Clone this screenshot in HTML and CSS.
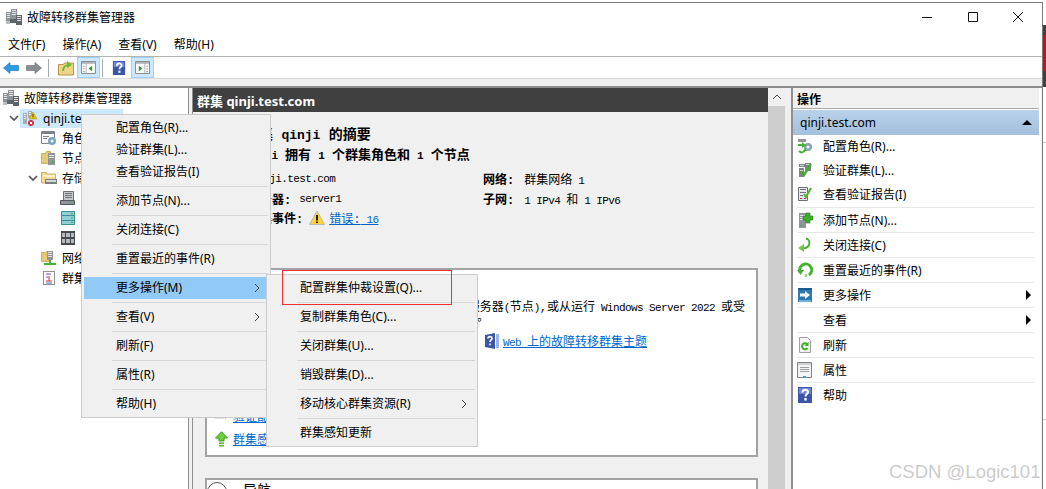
FILE: index.html
```html
<!DOCTYPE html>
<html lang="zh-CN">
<head>
<meta charset="utf-8">
<title>故障转移群集管理器</title>
<link rel="stylesheet" href="styles.css">
</head>
<body>
<svg class="defs" aria-hidden="true">
  <symbol id="i-cluster" viewBox="0 0 16 16">
    <path fill="#8d9296" d="M0 3h5v9H0zM5 0h6v10H5z"/>
    <path fill="#5f6468" d="M10 6h6v10h-6zM4 10h7v4H4z"/>
    <path fill="#e2e4e6" d="M1 4h3v1H1zM1 6h3v1H1zM1 8h3v1H1zM6 1h4v1H6zM6 3h4v1H6zM6 5h4v1H6zM11 7h4v1h-4zM11 9h4v1h-4zM11 11h4v1h-4z"/>
    <path fill="#b9bec2" d="M0 12h4v3H0z"/>
  </symbol>
  <symbol id="i-qinji" viewBox="0 0 16 16">
    <path fill="#a8adb2" d="M1 3h4v11H1zM6 1h4v7H6z"/>
    <path fill="#e8eaec" d="M2 4h2v1H2zM2 6h2v1H2zM2 8h2v1H2zM7 2h2v1H7zM7 4h2v1H7z"/>
    <path fill="#f5c518" stroke="#a98a10" stroke-width=".5" d="M11 2l4 7H7z"/>
    <path fill="#222" d="M10.600 4h.8v3h-.8zM10.600 7.500h.8v.8h-.8z"/>
    <circle cx="9" cy="13" r="3" fill="#c8303a"/>
    <path stroke="#fff" d="M7.800 11.800l2.400 2.400M10.200 11.800l-2.400 2.400"/>
  </symbol>
  <symbol id="i-roles" viewBox="0 0 16 16">
    <path fill="#fff" stroke="#7d8388" d="M.5 1.500h13v12H.5z"/>
    <path fill="#7d8388" d="M1 2h12v2H1zM2 6h6v1H2zM2 8h4v1H2z"/>
    <circle cx="11" cy="11" r="4" fill="#7ba3c4"/>
    <circle cx="11" cy="11" r="1.500" fill="#fff"/>
  </symbol>
  <symbol id="i-nodes" viewBox="0 0 16 16">
    <path fill="#e8c977" stroke="#b89a4d" stroke-width=".7" d="M.5 3.500h4l1-2h4v12h-9z"/>
    <path fill="#8f959a" d="M7 3h7v12H7z"/>
    <path fill="#e4e6e8" d="M8 5h5v1H8zM8 7h5v1H8z"/>
    <path fill="#46b030" d="M11 11h2v2h-2z"/>
  </symbol>
  <symbol id="i-storage" viewBox="0 0 16 16">
    <path fill="#f2d98e" stroke="#b89a4d" stroke-width=".7" d="M.5 2.500h5l1 1.500h8v9h-14z"/>
    <path fill="#fff3c9" d="M2 5h12v2H2z"/>
    <path fill="#787e83" d="M4 9h12v5H4z"/>
    <path fill="#d6d9db" d="M5 10h10v2H5z"/>
    <path fill="#46b030" d="M13 12.500h2v1h-2z"/>
  </symbol>
  <symbol id="i-disk" viewBox="0 0 16 16">
    <path fill="#c5c9cc" stroke="#6d7378" d="M3.500 1.500h10v9h-10z"/>
    <path fill="#6d7378" d="M5 3h7v1H5zM5 5h7v1H5zM5 7h7v1H5z"/>
    <path fill="#8f959a" stroke="#55595d" d="M.5 10.500h14v4H.500z"/>
    <path fill="#46b030" d="M11 12h2v1h-2z"/>
  </symbol>
  <symbol id="i-pool" viewBox="0 0 16 16">
    <path fill="#8fd0d6" stroke="#3f8c99" d="M1.500 1.500h13v13h-13z"/>
    <path fill="#3f8c99" d="M2 5h12v1H2zM2 10h12v1H2z"/>
    <path fill="#46b030" d="M11 3h2v1h-2zM11 7.500h2v1h-2zM11 12h2v1h-2z"/>
  </symbol>
  <symbol id="i-enclosure" viewBox="0 0 16 16">
    <path fill="#454a4e" d="M1 1h14v14H1z"/>
    <path fill="#b6babd" d="M2 3h3v4H2zM6 3h4v4H6zM11 3h3v4h-3zM2 9h3v4H2zM6 9h4v4H6zM11 9h3v4h-3z"/>
  </symbol>
  <symbol id="i-network" viewBox="0 0 16 16">
    <path fill="#e8c977" stroke="#b89a4d" stroke-width=".7" d="M.5 2.500h4l1-1h4v10h-9z"/>
    <path fill="#8f959a" d="M6 1h6v9H6z"/>
    <path fill="#e4e6e8" d="M7 2h4v1H7zM7 4h4v1H7zM7 6h4v1H7z"/>
    <path fill="#46b030" d="M8 10h2v3h5v2H3v-2h5z"/>
  </symbol>
  <symbol id="i-events" viewBox="0 0 16 16">
    <path fill="#fff" stroke="#222" stroke-dasharray="1 1" d="M2.500 1.500h11v13h-11z"/>
    <path stroke="#8a3fa0" fill="none" d="M5 4h5M5 7h2"/>
    <path stroke="#c8303a" fill="none" d="M8 6v5M5 11h6"/>
    <path stroke="#4a6fc0" fill="none" d="M5 13h6"/>
  </symbol>
  <symbol id="i-chev-down" viewBox="0 0 16 16">
    <path fill="none" stroke="#555" stroke-width="1.700" d="M4 6l4 4 4-4"/>
  </symbol>
  <symbol id="i-help" viewBox="0 0 16 16">
    <path fill="#3c55a8" d="M1 0h14v16H1z"/>
    <path fill="#6f86d2" d="M2 1h12v6H2z"/>
    <path fill="none" stroke="#fff" stroke-width="2" d="M5.500 5.500c0-3.500 5.500-3.500 5.500-.5 0 2-2.500 2-2.500 4.500"/>
    <path fill="#fff" d="M7.300 11h2.400v2.500H7.300z"/>
  </symbol>
  <symbol id="i-book" viewBox="0 0 16 16">
    <path fill="#9fb3e0" d="M12 1h3v14h-3z"/>
    <path fill="#3c55a8" d="M1 2l10-2v16l-10-2z"/>
    <path fill="none" stroke="#fff" stroke-width="1.600" d="M4 5.500c0-2.500 4-2.500 4 0 0 1.500-2 1.500-2 3.500"/>
    <path fill="#fff" d="M5.200 10.500h1.600v1.800H5.200z"/>
  </symbol>
  <symbol id="i-rolecfg" viewBox="0 0 16 16">
    <path fill="#8f959a" d="M1 1h8v3H1z"/>
    <circle cx="11" cy="9" r="4" fill="#8aa0b4"/>
    <circle cx="11" cy="9" r="1.500" fill="#fff"/>
    <path fill="none" stroke="#46b030" stroke-width="2" d="M1 7h5M2 13c2 2 5 2 6-1"/>
    <path fill="#46b030" d="M5 4l4 3-4 3zM8 10l2 3H6z"/>
  </symbol>
  <symbol id="i-validate" viewBox="0 0 16 16">
    <path fill="#7d8388" d="M2 2h6v3H2zM8 1h6v8H8zM2 6h5v9H2z"/>
    <path fill="#d6d9db" d="M3 3h4v1H3zM9 2h4v1H9zM3 8h3v1H3z"/>
    <path fill="none" stroke="#3fae2a" stroke-width="2.400" d="M4 9l3 4 7-11"/>
  </symbol>
  <symbol id="i-report" viewBox="0 0 16 16">
    <path fill="#e6e8ea" stroke="#6d7378" d="M1.500 1.500h9v13h-9z"/>
    <path fill="#6d7378" d="M3 3h6v1H3zM3 6h6v1H3zM3 9h3v1H3z"/>
    <path fill="#c8303a" d="M3 12h2v1H3zM7 12h2v1H7z"/>
    <path fill="none" stroke="#5ab030" stroke-width="2.200" d="M7 8l2 3 5-9"/>
  </symbol>
  <symbol id="i-add" viewBox="0 0 16 16">
    <path fill="#8f959a" d="M2 1h7v15H2z"/>
    <path fill="#e4e6e8" d="M3 3h5v1H3zM3 5h5v1H3zM3 7h3v1H3z"/>
    <path fill="#3fb02a" stroke="#1f7a1a" stroke-width=".6" d="M9 1h4v3h3v4h-3v3H9V8H6V4h3z"/>
    <path fill="#46b030" d="M3 13h2v1H3z"/>
  </symbol>
  <symbol id="i-close" viewBox="0 0 16 16">
    <path fill="none" stroke="#46b030" stroke-width="2" d="M9 1.500c5 1 5 9.500-3 10"/>
    <path fill="#6fca3c" d="M7 7v8l-6-4z"/>
  </symbol>
  <symbol id="i-reset" viewBox="0 0 16 16">
    <path fill="none" stroke="#46b030" stroke-width="3" d="M3 10a6 6 0 1 1 9 3"/>
    <path fill="#46b030" d="M0 8h7l-3.500 5z"/>
    <path fill="#8fdc6a" d="M8 12h2v3H8z"/>
  </symbol>
  <symbol id="i-more" viewBox="0 0 16 16">
    <path fill="#2e7ab0" d="M1 1h14v14H1z"/>
    <path fill="#1f5a88" d="M1 1h14v2H1z"/>
    <path fill="#6fb3d8" d="M2 13h12v2H2z"/>
    <path fill="#fff" d="M3 6.500h5V4l5 4-5 4V9.500H3z"/>
  </symbol>
  <symbol id="i-refresh" viewBox="0 0 16 16">
    <path fill="#f2f2f2" stroke="#9a9fa4" d="M2.500.5h8l3 3v12h-11z"/>
    <path fill="none" stroke="#3fae2a" stroke-width="2" d="M10.500 11a3 3 0 1 1 0-3.500"/>
    <path fill="#3fae2a" d="M11.500 5v4h-4z"/>
  </symbol>
  <symbol id="i-props" viewBox="0 0 16 16">
    <path fill="#f4f4f4" stroke="#7d8388" d="M.5.5h14v15H.5z"/>
    <path fill="#cdd1d4" d="M1 1h13v2H1z"/>
    <path fill="#9aa0a5" d="M3 5h9v1H3zM3 7h9v1H3zM3 9h9v1H3z"/>
    <path fill="#39a9e0" d="M6 14h3v1.500H6z"/>
  </symbol>
  <symbol id="i-warn" viewBox="0 0 16 16">
    <path fill="#ffd23a" stroke="#b7b7b7" d="M8 1l7.500 13.500H.5z"/>
    <path fill="#222" d="M7 5h2v5.500H7zM7 11.500h2V13H7z"/>
  </symbol>
  <symbol id="i-up" viewBox="0 0 16 16">
    <path fill="#6fcf3c" stroke="#3c9a20" d="M6.500.8L12.500 7H9v3H4V7H.5z"/>
    <path fill="#58b52c" d="M4 11.500h5V13H4zM4 14h5v1.500H4z"/>
  </symbol>
  <symbol id="i-server-go" viewBox="0 0 16 16">
    <path fill="#dcdcdc" d="M0 5h9v6H0z"/>
    <path fill="#46b030" d="M6 4h4V1l5 5-5 5V8H6z"/>
  </symbol>
</svg>

<div class="screen">
  <div class="window">
    <header class="titlebar">
      <svg class="ico"><use href="#i-cluster"/></svg>
      <span class="title">故障转移群集管理器</span>
      <div class="controls">
        <svg class="ctl" viewBox="0 0 12 12"><path d="M1 6.500h10" stroke="#111" fill="none"/></svg>
        <svg class="ctl" viewBox="0 0 12 12"><path d="M1.500 1.500h9v9h-9z" stroke="#111" fill="none"/></svg>
        <svg class="ctl" viewBox="0 0 12 12"><path d="M1 1l10 10M11 1L1 11" stroke="#111" fill="none"/></svg>
      </div>
    </header>

    <nav class="menubar">
      <span>文件(F)</span><span>操作(A)</span><span>查看(V)</span><span>帮助(H)</span>
    </nav>

    <div class="toolbar">
      <svg class="tb" viewBox="0 0 16 16"><path fill="#2d9be0" stroke="#1a6fb0" stroke-width=".6" d="M.5 8L7 2.500V5.500h8.500v5H7v3z"/></svg>
      <svg class="tb" viewBox="0 0 16 16"><path fill="#8a8d90" stroke="#6a6d70" stroke-width=".6" d="M15.500 8L9 2.500V5.500H.5v5H9v3z"/></svg>
      <i class="tb-sep"></i>
      <svg class="tb tb-folder" viewBox="0 0 16 16">
        <path fill="#efd58a" stroke="#b3924a" d="M.5 4.500h5l1-1.500h9v12H.5z"/>
        <path fill="none" stroke="#6dbb2f" stroke-width="2" d="M5 11c0-4 3-6 6-6"/>
        <path fill="#6dbb2f" d="M9 1l5 4-5 3z"/>
      </svg>
      <span class="tb-btn">
        <svg class="tb-win" viewBox="0 0 16 14">
          <path fill="#fff" stroke="#7d8388" d="M.5.5h15v13H.5z"/>
          <path fill="#aab0b5" d="M1 1h14v2H1zM5 3h1v10H5z"/>
          <path fill="#2a9a2a" d="M12 5v6L8 8z"/>
          <path fill="#7d8388" d="M2 5h2v1H2zM2 8h2v1H2zM2 11h2v1H2z"/>
        </svg>
      </span>
      <i class="tb-sep tb-sep-b"></i>
      <svg class="tb tb-help"><use href="#i-help"/></svg>
      <span class="tb-btn">
        <svg class="tb-win" viewBox="0 0 16 14">
          <path fill="#fff" stroke="#7d8388" d="M.5.5h15v13H.5z"/>
          <path fill="#aab0b5" d="M1 1h14v2H1zM10 3h1v10h-1z"/>
          <path fill="#2a9a2a" d="M4 5v6l4-3z"/>
          <path fill="#7d8388" d="M12 5h2v1h-2zM12 8h2v1h-2zM12 11h2v1h-2z"/>
        </svg>
      </span>
    </div>
    <div class="strip"></div>

    <main class="panes">
      <aside class="tree">
        <div class="row l0"><svg class="ico"><use href="#i-cluster"/></svg><span>故障转移群集管理器</span></div>
        <div class="row l1"><svg class="chev"><use href="#i-chev-down"/></svg><div class="sel"><svg class="ico"><use href="#i-qinji"/></svg><span>qinji.test.com</span></div></div>
        <div class="row l2"><i class="chev"></i><svg class="ico"><use href="#i-roles"/></svg><span>角色</span></div>
        <div class="row l2"><i class="chev"></i><svg class="ico"><use href="#i-nodes"/></svg><span>节点</span></div>
        <div class="row l2"><svg class="chev"><use href="#i-chev-down"/></svg><svg class="ico"><use href="#i-storage"/></svg><span>存储</span></div>
        <div class="row l3"><i class="chev"></i><svg class="ico"><use href="#i-disk"/></svg></div>
        <div class="row l3"><i class="chev"></i><svg class="ico"><use href="#i-pool"/></svg></div>
        <div class="row l3"><i class="chev"></i><svg class="ico"><use href="#i-enclosure"/></svg></div>
        <div class="row l2"><i class="chev"></i><svg class="ico"><use href="#i-network"/></svg><span>网络</span></div>
        <div class="row l2"><i class="chev"></i><svg class="ico"><use href="#i-events"/></svg><span>群集事件</span></div>
      </aside>

      <section class="center">
        <div class="center-main">
          <h1 class="center-head">群集 qinji.test.com</h1>
          <div class="center-body">
            <div class="summary">
              <h2 class="sum-title">群集 <span class="mb">qinji</span> 的摘要</h2>
              <p class="sum-sub"><span class="ms">qinji</span> 拥有 <span class="ms">1</span> 个群集角色和 <span class="ms">1</span> 个节点</p>
              <div class="facts">
                <div class="fact"><b>名称:</b><span class="m">qinji.test.com</span></div>
                <div class="fact"><b>网络:</b><span class="val">群集网络<span class="m"> 1</span></span></div>
                <div class="fact"><b>当前主服务器:</b><span class="m">server1</span></div>
                <div class="fact"><b>子网:</b><span class="val"><span class="m">1 IPv4 </span>和<span class="m"> 1 IPv6</span></span></div>
                <div class="fact fact-wide"><b>最近的群集事件:</b><svg class="ico warn"><use href="#i-warn"/></svg><a class="link" href="#">错误:<span class="m"> 16</span></a></div>
              </div>
            </div>

            <div class="card card-config">
              <p class="line-right">服务器<span class="m">(</span>节点<span class="m">)</span>,或从运行<span class="m"> Windows Server 2022 </span>或受</p>
              <p class="line-left">。</p>
              <div class="web-link"><svg class="ico"><use href="#i-book"/></svg><a class="link" href="#"><span class="m">Web </span>上的故障转移群集主题</a></div>
              <div class="task task-first"><svg class="ico"><use href="#i-server-go"/></svg><a class="link" href="#">验证配置</a></div>
              <div class="task"><svg class="ico up"><use href="#i-up"/></svg><a class="link" href="#">群集感知更新</a></div>
            </div>

            <div class="card card-nav">
              <span class="circle"></span><span class="nav-title">导航</span>
            </div>
          </div>
        </div>
        <div class="scroll">
          <div class="scroll-btn"><svg class="scroll-arrow" viewBox="0 0 10 6"><path d="M1 5l4-4 4 4" fill="none" stroke="#505050"/></svg></div>
          <div class="scroll-thumb"></div>
        </div>
      </section>

      <aside class="actions">
        <div class="act-head">操作</div>
        <div class="act-band"><span>qinji.test.com</span><i class="tri-up"></i></div>
        <div class="act act-tight"><svg class="ico"><use href="#i-rolecfg"/></svg><span>配置角色(R)...</span></div>
        <div class="act act-tight"><svg class="ico"><use href="#i-validate"/></svg><span>验证群集(L)...</span></div>
        <div class="act act-tight"><svg class="ico"><use href="#i-report"/></svg><span>查看验证报告(I)</span></div>
        <div class="act"><svg class="ico"><use href="#i-add"/></svg><span>添加节点(N)...</span></div>
        <div class="act"><svg class="ico"><use href="#i-close"/></svg><span>关闭连接(C)</span></div>
        <div class="act"><svg class="ico"><use href="#i-reset"/></svg><span>重置最近的事件(R)</span></div>
        <div class="act"><svg class="ico"><use href="#i-more"/></svg><span>更多操作</span><i class="tri-right"></i></div>
        <div class="act"><i class="ico"></i><span>查看</span><i class="tri-right"></i></div>
        <div class="act"><svg class="ico"><use href="#i-refresh"/></svg><span>刷新</span></div>
        <div class="act"><svg class="ico"><use href="#i-props"/></svg><span>属性</span></div>
        <div class="act"><svg class="ico"><use href="#i-help"/></svg><span>帮助</span></div>
      </aside>
    </main>
  </div>

  <div class="edge"></div>

  <div class="ctx ctx-main">
    <div class="item">配置角色(R)...</div>
    <div class="item">验证群集(L)...</div>
    <div class="item">查看验证报告(I)</div>
    <hr class="sep">
    <div class="item">添加节点(N)...</div>
    <hr class="sep">
    <div class="item">关闭连接(C)</div>
    <hr class="sep">
    <div class="item">重置最近的事件(R)</div>
    <hr class="sep">
    <div class="item hl">更多操作(M)<svg class="sub" viewBox="0 0 6 10"><path d="M1 1l4 4-4 4" fill="none" stroke="#444"/></svg></div>
    <hr class="sep">
    <div class="item">查看(V)<svg class="sub" viewBox="0 0 6 10"><path d="M1 1l4 4-4 4" fill="none" stroke="#444"/></svg></div>
    <hr class="sep">
    <div class="item">刷新(F)</div>
    <hr class="sep">
    <div class="item">属性(R)</div>
    <hr class="sep">
    <div class="item">帮助(H)</div>
  </div>

  <div class="ctx ctx-sub">
    <div class="item">配置群集仲裁设置(Q)...</div>
    <hr class="sep">
    <div class="item">复制群集角色(C)...</div>
    <hr class="sep">
    <div class="item">关闭群集(U)...</div>
    <hr class="sep">
    <div class="item">销毁群集(D)...</div>
    <hr class="sep">
    <div class="item">移动核心群集资源(R)<svg class="sub" viewBox="0 0 6 10"><path d="M1 1l4 4-4 4" fill="none" stroke="#444"/></svg></div>
    <hr class="sep">
    <div class="item">群集感知更新</div>
  </div>

  <div class="redbox"></div>
  <div class="watermark">CSDN @Logic101</div>
</div>
</body>
</html>
```

FILE: styles.css
```css
* { box-sizing: border-box; }

html, body {
  margin: 0;
  padding: 0;
  background: #fff;
}

body {
  font-family: "Noto Sans", "Noto Sans CJK SC", sans-serif;
  font-size: 12px;
  color: #000;
}

.defs {
  position: absolute;
  width: 0;
  height: 0;
}

.screen {
  position: relative;
  width: 1046px;
  height: 489px;
  overflow: hidden;
  background: #fff;
}

.window {
  display: flex;
  flex-direction: column;
  width: 1043px;
  height: 487px;
  margin-top: 2px;
  border-top: 1px solid #7a7a7a;
  border-right: 1px solid #7a7a7a;
  background: #fff;
}

.ico {
  flex: none;
  display: block;
  width: 16px;
  height: 16px;
}

/* title bar */
.titlebar {
  display: flex;
  align-items: center;
  flex: none;
  height: 29px;
  padding-left: 6px;
  padding-bottom: 1px;
}

.title {
  margin-left: 5px;
}

.controls {
  display: flex;
  margin-left: auto;
  margin-right: 18px;
  gap: 33.500px;
}

.ctl {
  width: 12px;
  height: 12px;
}

/* menu */
.menubar {
  display: flex;
  align-items: center;
  flex: none;
  gap: 17px;
  height: 25px;
  padding-left: 8px;
  border-bottom: 1px solid #b4b4b4;
}

/* toolbar */
.toolbar {
  display: flex;
  align-items: center;
  flex: none;
  height: 22px;
  padding-left: 3px;
  border-bottom: 1px solid #dcdcdc;
}

.tb {
  flex: none;
  width: 16px;
  height: 16px;
  margin-right: 7px;
}

.tb-sep {
  flex: none;
  width: 1px;
  height: 18px;
  margin: 0 9px 0 -1px;
  background: #a8a8a8;
}

.tb-folder {
  margin-right: 3px;
}

.tb-btn {
  display: flex;
  align-items: center;
  justify-content: center;
  flex: none;
  width: 23px;
  height: 21px;
  background: #cce8ff;
  border: 1px solid #99d1ff;
}

.tb-win {
  width: 15px;
  height: 13px;
}

.tb-sep-b {
  margin-left: 2px;
}

.tb-help {
  width: 14px;
  margin-right: 5px;
}

.strip {
  flex: none;
  height: 7px;
  background: #eeeeee;
}

/* panes */
.panes {
  display: flex;
  flex: 1;
  min-height: 0;
  border-top: 2px solid #8c8c8c;
  background: #f0f0f0;
}

.tree {
  flex: none;
  width: 189px;
  background: #fff;
  border-right: 1px solid #8f8f8f;
}

.row {
  display: flex;
  align-items: center;
  height: 20px;
  white-space: nowrap;
}

.row .ico {
  margin-right: 5px;
}

.l0 { padding-left: 3px; }
.l1 { padding-left: 6px; }
.l2 { padding-left: 25px; }
.l3 { padding-left: 44px; }

.chev {
  flex: none;
  display: block;
  width: 16px;
  height: 16px;
}

.sel {
  display: flex;
  align-items: center;
  width: 103px;
  height: 19px;
  margin-left: -2px;
  padding-left: 2px;
  background: #cce8ff;
  overflow: hidden;
}

/* centre */
.center {
  display: flex;
  flex: none;
  width: 593px;
  margin-left: 3px;
  border-left: 1px solid #8f8f8f;
}

.center-main {
  display: flex;
  flex-direction: column;
  width: 575px;
  min-width: 0;
}

.center-head {
  flex: none;
  height: 24px;
  margin: 0;
  padding-left: 4px;
  background: #404040;
  color: #fff;
  font-size: 13px;
  font-weight: 700;
  line-height: 26px;
  white-space: nowrap;
}

.center-body {
  flex: 1;
  padding: 0 10px 0 12px;
  overflow: hidden;
  background: #f0f0f0;
  font-family: "Liberation Mono", "Noto Sans CJK SC", monospace;
}

.m {
  font-family: "Liberation Mono", monospace;
  font-size: 11px;
  letter-spacing: -0.6px;
}

.mb {
  font-family: "Liberation Mono", monospace;
  font-size: 13px;
}

.ms {
  font-family: "Liberation Mono", monospace;
  font-size: 11px;
}

.summary {
  height: 156px;
  padding-top: 12px;
  padding-left: 7px;
}

.sum-title {
  height: 22px;
  margin: 0 0 0 33px;
  font-size: 14px;
  font-weight: 700;
  line-height: 22px;
}

.sum-sub {
  height: 20px;
  margin: 0 0 0 33px;
  font-size: 13px;
  font-weight: 700;
  line-height: 20px;
  word-spacing: -0.7px;
}

.facts {
  display: grid;
  grid-template-columns: 271px 1fr;
  margin-top: 3px;
}

.fact {
  display: flex;
  align-items: center;
  height: 20px;
  white-space: pre;
}

.fact b {
  margin-right: 8px;
  font-weight: 700;
}

.val {
  margin-left: 2px;
}

.fact-wide {
  grid-column: 1 / span 2;
  margin-top: -1px;
}

.warn {
  margin: 0 4px 0 -2px;
}

.link {
  color: #0066cc;
  text-decoration: underline;
  white-space: pre;
}

.card {
  width: 553px;
  background: #fff;
  border: 2px solid #a3a3a3;
}

.card-config {
  display: flex;
  flex-direction: column;
  height: 189px;
}

.line-right {
  height: 14px;
  margin: 31px 11px 0 0;
  line-height: 14px;
  text-align: right;
  white-space: pre;
}

.line-left {
  height: 14px;
  margin: -4px 0 0 270px;
  line-height: 14px;
}

.web-link {
  display: flex;
  align-items: center;
  gap: 3px;
  height: 16px;
  margin: 8px 0 0 277px;
}

.task {
  display: flex;
  align-items: center;
  gap: 2px;
  height: 16px;
  margin-top: 7px;
  margin-left: 8px;
}

.task-first {
  margin-top: auto;
}

.card-config .task:last-child {
  margin-bottom: 8px;
}

.card-nav {
  display: flex;
  align-items: flex-start;
  height: 30px;
  margin-top: 21px;
  padding-top: 2px;
}

.circle {
  flex: none;
  width: 20px;
  height: 20px;
  border: 1px solid #555;
  border-radius: 50%;
}

.nav-title {
  margin-left: 16px;
  font-size: 14px;
  line-height: 18px;
}

.scroll {
  display: flex;
  flex: none;
  flex-direction: column;
  width: 17px;
  background: #fff;
}

.scroll-btn {
  display: flex;
  align-items: center;
  justify-content: center;
  flex: none;
  height: 18px;
  background: #f0f0f0;
}

.scroll-arrow {
  width: 10px;
  height: 6px;
}

.scroll-thumb {
  flex: 1;
  background: #cdcdcd;
}

/* actions */
.actions {
  flex: none;
  width: 250px;
  margin-left: 6px;
  background: #fff;
  border-left: 2px solid #8f8f8f;
  border-right: 2px solid #fff;
}

.act-head {
  height: 21px;
  padding-left: 4px;
  background: #f0f0f0;
  border-bottom: 1px solid #a8a8a8;
  font-weight: 700;
  line-height: 23px;
}

.act-band {
  display: flex;
  align-items: center;
  justify-content: space-between;
  height: 25px;
  margin-top: 1px;
  padding: 0 7px;
  background: linear-gradient(#b9d2ea, #a2bfdc);
}

.tri-up {
  width: 0;
  height: 0;
  border-left: 5px solid transparent;
  border-right: 5px solid transparent;
  border-bottom: 5px solid #000;
}

.act {
  display: flex;
  align-items: center;
  gap: 10px;
  height: 25px;
  margin: 0 5px 0 4px;
  border-top: 1px solid #e8e8e8;
  white-space: nowrap;
}

.act-tight {
  height: 24px;
  padding-bottom: 2px;
  border-top: 0;
}

.tri-right {
  width: 0;
  height: 0;
  margin-left: auto;
  margin-right: 3px;
  border-top: 5px solid transparent;
  border-bottom: 5px solid transparent;
  border-left: 5px solid #000;
}

/* neighbouring window peeking past the right edge */
.edge {
  position: absolute;
  top: 0;
  left: 1043px;
  width: 3px;
  height: 489px;
  background:
    linear-gradient(#404040, #404040) 0 25px / 3px 10px no-repeat,
    linear-gradient(#c8101a, #c8101a) 0 35px / 3px 36px no-repeat,
    linear-gradient(#404040, #404040) 0 71px / 3px 16px no-repeat,
    linear-gradient(#cccccc, #cccccc) 0 142px / 3px 1px no-repeat,
    linear-gradient(#cccccc, #cccccc) 0 419px / 3px 1px no-repeat;
}

/* context menus */
.ctx {
  position: absolute;
  padding: 2px;
  background: #f0f0f0;
  border: 1px solid #cccccc;
  white-space: nowrap;
}

.ctx-main {
  top: 114px;
  left: 81px;
  width: 190px;
}

.ctx-sub {
  top: 274px;
  left: 266px;
  width: 212px;
}

.item {
  position: relative;
  height: 22px;
  padding-left: 32px;
  line-height: 22px;
}

.ctx-sub .item {
  padding-left: 31px;
}

.hl {
  background: #91c9f7;
}

.sub {
  position: absolute;
  top: 6px;
  right: 8px;
  width: 6px;
  height: 10px;
}

.sep {
  height: 1px;
  margin: 3px 0 3px 28px;
  padding: 0;
  border: 0;
  background: #d7d7d7;
}

.redbox {
  position: absolute;
  top: 270px;
  left: 282px;
  width: 170px;
  height: 35px;
  border: 1px solid #f03030;
}

.watermark {
  position: absolute;
  top: 460px;
  left: 889px;
  color: rgba(150, 150, 150, 0.5);
  font-family: "Liberation Sans", sans-serif;
  font-size: 18.500px;
  line-height: 24px;
  white-space: nowrap;
}
```
